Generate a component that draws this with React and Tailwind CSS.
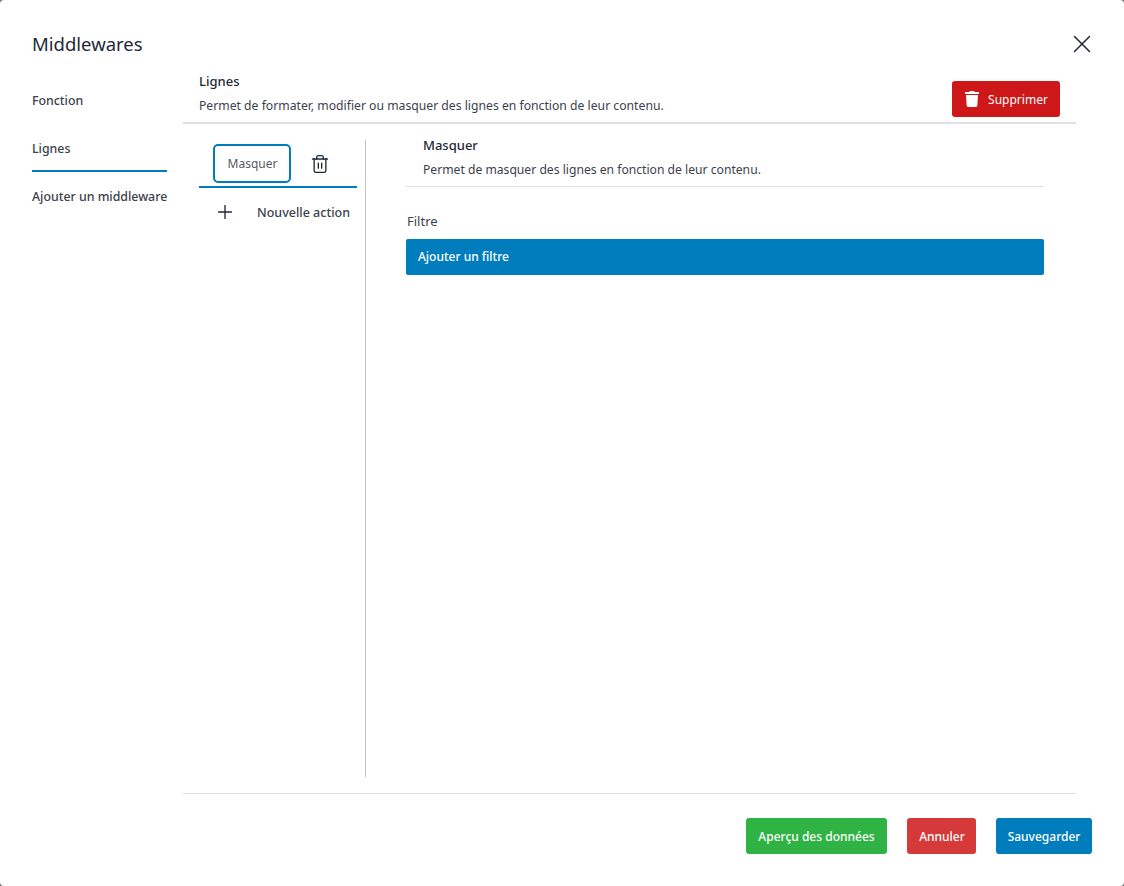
import React from "react";
import { X, Plus, Trash2 } from "lucide-react";
import { FaTrash } from "react-icons/fa";

const font = "font-['Noto_Sans',sans-serif]";

const App = () => {
    return (
        <div className={`${font} w-[1124px] h-[886px] bg-[#6b6b6b] overflow-hidden`}>
            <div className="w-full h-full bg-white rounded-[4px] flex flex-col text-[#3b424d]">
                {/* header */}
                <div className="flex justify-between items-center pl-8 pr-[27px] pt-[31px] h-[76px] pb-[19px]">
                    <h1 className="text-[18.5px] text-[#1f2937]">Middlewares</h1>
                    <X className="w-[30px] h-[30px] text-[#1f2937]" strokeWidth={1.2} />
                </div>

                <div className="flex flex-1">
                    {/* nav */}
                    <div className="w-[135px] ml-8 text-[12.35px] font-medium">
                        <div className="h-12 flex items-center pt-[2px]">Fonction</div>
                        <div className="h-12 flex items-center pt-[4px] border-b-2 border-[#007dbc]">Lignes</div>
                        <div className="h-12 flex items-center pt-[2px] whitespace-nowrap">Ajouter un middleware</div>
                    </div>

                    {/* content */}
                    <div className="w-[893px] ml-4 flex flex-col">
                        <div className="flex justify-between border-b-2 border-[#e0e0e0] h-[48px] pl-4 pr-4">
                            <div>
                                <div className="text-[13px] font-medium leading-5 mt-[-5px] text-[#1f2937]">Lignes</div>
                                <div className="text-[12.2px] leading-5 mt-[5px]">Permet de formater, modifier ou masquer des lignes en fonction de leur contenu.</div>
                            </div>
                            <button className="w-[108px] h-9 mt-[5px] pl-px bg-[#cd1719] rounded-[3px] text-white text-xs flex items-center justify-center gap-[9px]">
                                <FaTrash className="w-[14px] h-4" />
                                <span className="pt-px">Supprimer</span>
                            </button>
                        </div>

                        <div className="flex mt-4 h-[637px]">
                            <div className="w-[183px] pl-4 pr-2 border-r border-[#c4c4c4]">
                                <div className="flex items-center border-b-2 border-[#007dbc] h-12 pl-[14px]">
                                    <div className="w-[78px] h-[39px] border-2 border-[#007dbc] rounded-[5px] flex items-center justify-center text-xs text-[#555b65] pt-[2px] pl-px">Masquer</div>
                                    <Trash2 className="w-[20px] h-[20px] ml-[19px] mt-[2px] text-[#1f2937]" strokeWidth={1.6} />
                                </div>
                                <div className="flex items-center h-12 pl-[15px]">
                                    <Plus className="w-[22px] h-[22px] text-[#1f2937]" strokeWidth={1.5} />
                                    <span className="text-[12.5px] font-medium ml-[21px] pt-[2px] whitespace-nowrap">Nouvelle action</span>
                                </div>
                            </div>

                            <div className="w-[638px] ml-10">
                                <div className="border-b border-[#dedede] h-[52px] pl-[17px]">
                                    <div className="text-[13px] font-medium leading-5 mt-[-5px] text-[#1f2937]">Masquer</div>
                                    <div className="text-[12.15px] leading-5 mt-[5px]">Permet de masquer des lignes en fonction de leur contenu.</div>
                                </div>
                                <div className="text-[13px] mt-[26px] ml-px leading-4">Filtre</div>
                                <div className="mt-[10px] h-9 bg-[#007dbc] rounded-[2px] text-white text-xs font-medium flex items-center pl-3">Ajouter un filtre</div>
                            </div>
                        </div>

                        <div className="border-t border-[#e0e0e0] mt-4"></div>
                    </div>
                </div>

                {/* footer */}
                <div className="flex justify-end gap-5 pr-8 mb-8 text-white text-xs font-medium">
                    <button className="w-[141px] h-9 bg-[#2fb344] rounded-[3px] pt-px">Aperçu des données</button>
                    <button className="w-[69px] h-9 bg-[#d63939] rounded-[3px] pt-px pl-px">Annuler</button>
                    <button className="w-[96px] h-9 bg-[#007dbc] rounded-[3px] pt-px">Sauvegarder</button>
                </div>
            </div>
        </div>
    );
};

export default App;
